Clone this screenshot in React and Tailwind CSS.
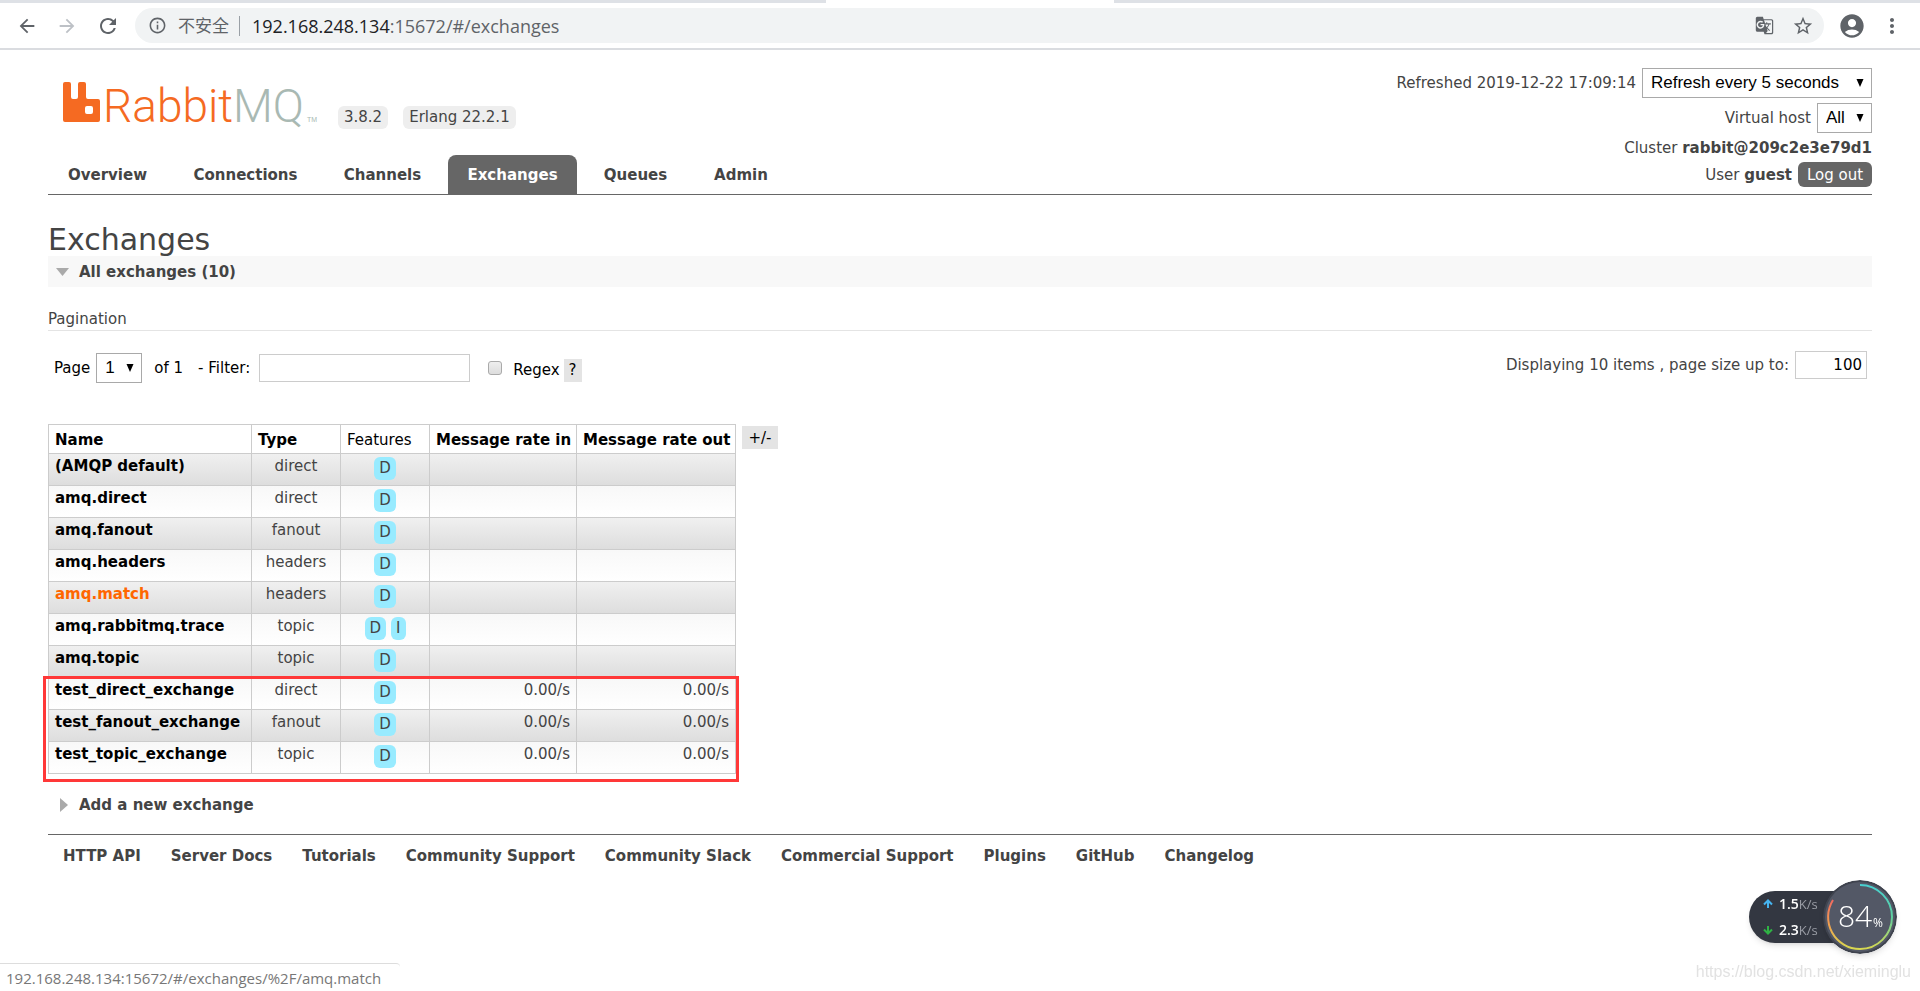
import React from "react";
import {
  MdArrowBack,
  MdArrowForward,
  MdRefresh,
  MdInfoOutline,
  MdGTranslate,
  MdStarBorder,
  MdAccountCircle,
  MdMoreVert,
} from "react-icons/md";

const tabs = [
  { name: "Overview", width: "w-[119px]" },
  { name: "Connections", width: "w-[143px]" },
  { name: "Channels", width: "w-[117px]" },
  { name: "Exchanges", width: "w-[129px]", active: true },
  { name: "Queues", width: "w-[103px]" },
  { name: "Admin", width: "w-[94px]" },
];

const exchanges = [
  { name: "(AMQP default)", type: "direct", features: ["D"] },
  { name: "amq.direct", type: "direct", features: ["D"] },
  { name: "amq.fanout", type: "fanout", features: ["D"] },
  { name: "amq.headers", type: "headers", features: ["D"] },
  { name: "amq.match", type: "headers", features: ["D"], hovered: true },
  { name: "amq.rabbitmq.trace", type: "topic", features: ["D", "I"] },
  { name: "amq.topic", type: "topic", features: ["D"] },
  { name: "test_direct_exchange", type: "direct", features: ["D"], rate: "0.00/s" },
  { name: "test_fanout_exchange", type: "fanout", features: ["D"], rate: "0.00/s" },
  { name: "test_topic_exchange", type: "topic", features: ["D"], rate: "0.00/s" },
];

const footerLinks = [
  "HTTP API",
  "Server Docs",
  "Tutorials",
  "Community Support",
  "Community Slack",
  "Commercial Support",
  "Plugins",
  "GitHub",
  "Changelog",
];

const BrowserBar = () => (
  <div className="border-b-2 border-[#dadce0] bg-white">
    {/* bottom edge of the tab strip, open under the active tab */}
    <div className="flex h-[3px] justify-between">
      <div className="w-[43%] bg-[#dee1e6]" />
      <div className="w-[42%] bg-[#dee1e6]" />
    </div>
    <div className="flex h-[45px] items-center pr-4 pl-4 text-[#5f6368]">
      <button aria-label="Back" className="mr-[18px]">
        <MdArrowBack size={22} />
      </button>
      <button aria-label="Forward" className="mr-[18px] text-[#bdc1c6]">
        <MdArrowForward size={22} />
      </button>
      <button aria-label="Reload" className="mr-[15px]">
        <MdRefresh size={24} />
      </button>
      <div className="flex h-[35px] flex-1 items-center rounded-full bg-[#f1f3f4] pr-2.5 pl-[13px] font-['Noto_Sans','Noto_Sans_CJK_SC',sans-serif] text-[17px]">
        <MdInfoOutline size={19} />
        <span className="ml-[11px]">不安全</span>
        <span className="mr-3 ml-2.5 h-5 w-px bg-[#9aa0a6]" />
        <span className="flex-1 font-['Open_Sans',sans-serif] text-[18px]">
          <span className="text-[#202124]">192.168.248.134</span>:15672/#/exchanges
        </span>
        <button aria-label="Translate" className="mr-[18px]">
          <MdGTranslate size={19} />
        </button>
        <button aria-label="Bookmark">
          <MdStarBorder size={22} />
        </button>
      </div>
      <button aria-label="Profile" className="ml-3.5">
        <MdAccountCircle size={28} />
      </button>
      <button aria-label="Menu" className="ml-3.5">
        <MdMoreVert size={24} />
      </button>
    </div>
  </div>
);

const Logo = () => (
  <a href="#/" aria-label="RabbitMQ">
    <svg width="262" height="60" viewBox="0 0 262 60">
      <path
        fill="#f56a22"
        d="M2 5q0-2 2-2h4q2 0 2 2v13q0 2 2 2h3q2 0 2-2V5q0-2 2-2h4q2 0 2 2v13q0 2 2 2h10q2 0 2 2v19q0 2-2 2H4q-2 0-2-2zM26 27q-2 0-2 2v4q0 2 2 2h4q2 0 2-2v-4q0-2-2-2z"
        fillRule="evenodd"
      />
      <text x="42" y="43" fontSize="46" fontWeight="300" fontFamily="Roboto, sans-serif" fill="#f56a22">
        Rabbit<tspan fill="#a9b9b3">MQ</tspan>
      </text>
      <text x="246" y="43" fontSize="7" fontFamily="'Liberation Sans', sans-serif" fill="#a9b9b3">
        TM
      </text>
    </svg>
  </a>
);

const Select = ({ id, label, value, className }) => (
  <span className="relative inline-flex">
    <select
      id={id}
      aria-label={label}
      className={`h-[30px] appearance-none border border-[#a9a9a9] bg-white pl-2 font-['Liberation_Sans',sans-serif] text-[17px] text-black ${className}`}
    >
      <option>{value}</option>
    </select>
    <svg className="pointer-events-none absolute top-[11px] right-2" width="8" height="8" viewBox="0 0 8 8">
      <path d="M0.500 0h7L4 8z" />
    </svg>
  </span>
);

const Header = () => (
  <header className="flex items-end justify-between border-b border-[#666]">
    <div>
      <div className="flex items-end gap-[15px] pb-4 pl-[13px]">
        <Logo />
        <abbr className="mb-2.5 rounded-md bg-[#eee] px-1.5 leading-[23px]">3.8.2</abbr>
        <abbr className="mb-2.5 rounded-md bg-[#eee] px-1.5 leading-[23px]">Erlang 22.2.1</abbr>
      </div>
      <nav className="flex gap-[7px]">
        {tabs.map((tab) => (
          <a
            key={tab.name}
            href={`#/${tab.name.toLowerCase()}`}
            className={`h-[39px] rounded-t-lg text-center leading-[41px] font-bold whitespace-nowrap ${tab.width} ${
              tab.active ? "bg-[#666] text-white" : ""
            }`}
          >
            {tab.name}
          </a>
        ))}
      </nav>
    </div>
    <ul className="flex flex-col items-end pb-[7px]">
      <li className="mb-[5px] flex items-center gap-1.5">
        <label htmlFor="refresh">Refreshed 2019-12-22 17:09:14</label>
        <Select id="refresh" value="Refresh every 5 seconds" className="w-[230px]" />
      </li>
      <li className="mb-1 flex items-center gap-1.5">
        <label htmlFor="vhost">Virtual host</label>
        <Select id="vhost" value="All" className="w-[55px]" />
      </li>
      <li className="mb-0.5 leading-[23px]">
        Cluster <b>rabbit@209c2e3e79d1</b>
      </li>
      <li className="flex items-center gap-1.5">
        <span>
          User <b>guest</b>
        </span>
        <button className="h-[25px] w-[74px] rounded-md bg-[#666] text-white">Log out</button>
      </li>
    </ul>
  </header>
);

const Pagination = () => (
  <div className="flex items-start justify-between pr-[5px] pl-1.5">
    <div className="flex items-center pt-[22px] text-black">
      <label htmlFor="page" className="mr-1.5">
        Page
      </label>
      <Select id="page" value="1" className="w-[46px]" />
      <span className="ml-3">of 1</span>
      <label htmlFor="filter" className="ml-[15px] whitespace-nowrap">
        - Filter:
      </label>
      <input id="filter" type="text" className="ml-[9px] h-7 w-[211px] border border-[#ccc] px-1" />
      <input
        id="regex"
        type="checkbox"
        className="ml-[18px] size-3.5 appearance-none rounded-[3px] border border-[#aaa] bg-linear-to-b from-[#eee] to-[#ddd]"
      />
      <label htmlFor="regex" className="ml-[11px] pt-1">
        Regex
      </label>
      <button className="mt-1 ml-1 h-[23px] w-[18px] bg-[#e4e4e4]">?</button>
    </div>
    <div className="flex items-center gap-1.5 pt-5">
      <label htmlFor="size">Displaying 10 items , page size up to:</label>
      <input
        id="size"
        type="text"
        defaultValue="100"
        className="h-7 w-[72px] border border-[#ccc] px-1 text-right text-black"
      />
    </div>
  </div>
);

const ExchangeRow = ({ exchange }) => (
  <tr className="h-8 bg-linear-to-b odd:from-[#f0f0f0] odd:to-[#ddd] even:from-[#f8f8f8] even:to-white">
    <td className="border border-[#ccc] px-1.5 pt-px align-top font-bold whitespace-nowrap">
      <a href={`#/exchanges/${exchange.name}`} className={exchange.hovered ? "text-[#f60]" : "text-black"}>
        {exchange.name}
      </a>
    </td>
    <td className="border border-[#ccc] pt-px text-center align-top">{exchange.type}</td>
    <td className="border border-[#ccc] pt-[3px] align-top">
      <div className="flex justify-center gap-[5px]">
        {exchange.features.map((f) => (
          <span key={f} className="rounded-md bg-[#98ebff] px-[5px] leading-[23px]">
            {f}
          </span>
        ))}
      </div>
    </td>
    <td className="border border-[#ccc] px-1.5 pt-px text-right align-top">{exchange.rate}</td>
    <td className="border border-[#ccc] px-1.5 pt-px text-right align-top">{exchange.rate}</td>
  </tr>
);

const ExchangeTable = () => (
  <div className="mt-[41px] flex items-start gap-1.5">
    <div className="relative">
      <table className="w-[688px] table-fixed border-collapse leading-[22px]">
        <colgroup>
          <col className="w-[203px]" />
          <col className="w-[89px]" />
          <col className="w-[89px]" />
          <col className="w-[147px]" />
          <col className="w-[159px]" />
        </colgroup>
        <thead>
          <tr className="h-[29px] text-left whitespace-nowrap text-black">
            <th className="border border-[#ccc] px-1.5 pt-0.5">Name</th>
            <th className="border border-[#ccc] px-1.5 pt-0.5">Type</th>
            <th className="border border-[#ccc] px-1.5 pt-0.5 font-normal">Features</th>
            <th className="border border-[#ccc] px-1.5 pt-0.5">Message rate in</th>
            <th className="border border-[#ccc] px-1.5 pt-0.5">Message rate out</th>
          </tr>
        </thead>
        <tbody>
          {exchanges.map((exchange) => (
            <ExchangeRow key={exchange.name} exchange={exchange} />
          ))}
        </tbody>
      </table>
      {/* marks the three test exchanges */}
      <div className="pointer-events-none absolute -right-[3px] -bottom-2 -left-[5px] h-[106px] border-3 border-[#ff3838]" />
    </div>
    <button className="mt-0.5 h-[23px] w-9 bg-[#e4e4e4] text-black">+/-</button>
  </div>
);

const SpeedWidget = () => (
  <div className="fixed right-[23px] bottom-[37px] flex h-[74px] items-center">
    <div className="-mr-10 flex h-[52px] w-[114px] flex-col justify-center rounded-l-full bg-[#333741] pl-3.5 font-['Open_Sans',sans-serif] text-[14px] leading-[26px] font-semibold text-white shadow-md">
      <span className="flex items-center gap-1.5">
        <svg width="10" height="10" viewBox="0 0 10 10" fill="none" stroke="#46b4f0" strokeWidth="2">
          <path d="M5 9V2M1 5.500l4-4 4 4" />
        </svg>
        <span>
          1.5<span className="text-[13px] font-normal text-[#9a9da5]">K/s</span>
        </span>
      </span>
      <span className="flex items-center gap-1.5">
        <svg width="10" height="10" viewBox="0 0 10 10" fill="none" stroke="#2fb344" strokeWidth="2">
          <path d="M5 1v7M1 4.500l4 4 4-4" />
        </svg>
        <span>
          2.3<span className="text-[13px] font-normal text-[#9a9da5]">K/s</span>
        </span>
      </span>
    </div>
    <svg className="relative rounded-full shadow-md" width="74" height="74" viewBox="0 0 74 74">
      <defs>
        <linearGradient id="ringRight" x1="0" y1="0" x2="0" y2="1">
          <stop offset="0" stopColor="#48d0d0" />
          <stop offset="0.5" stopColor="#5fd0a0" />
          <stop offset="1" stopColor="#d8d850" />
        </linearGradient>
        <linearGradient id="ringLeft" x1="0" y1="0" x2="0" y2="1">
          <stop offset="0" stopColor="#f06a60" />
          <stop offset="0.5" stopColor="#f0a050" />
          <stop offset="1" stopColor="#d8d850" />
        </linearGradient>
      </defs>
      <circle cx="37" cy="37" r="37" fill="#3f434e" />
      <circle cx="37" cy="37" r="35" fill="#535866" />
      <path d="M37 5a32 32 0 0 1 0 64" fill="none" stroke="url(#ringRight)" strokeWidth="2" />
      <path d="M37 69A32 32 0 0 1 10 20" fill="none" stroke="url(#ringLeft)" strokeWidth="2" />
      <text x="15" y="47" fontSize="30" fontWeight="300" fontFamily="'Open Sans', sans-serif" fill="#fff">
        84
      </text>
      <text x="50" y="47" fontSize="12" fontFamily="'Open Sans', sans-serif" fill="#fff">
        %
      </text>
    </svg>
  </div>
);

const App = () => {
  return (
    <div className="min-h-screen bg-white font-['DejaVu_Sans',sans-serif] text-[15px] leading-[22px] text-[#444]">
      <BrowserBar />
      <main className="px-12 pt-[18px]">
        <Header />
        <h1 className="mt-7 text-[30px] leading-[33px] text-[#444]">Exchanges</h1>
        <h2 className="bg-[#f8f8f8] font-bold">
          <button className="flex h-[31px] items-center gap-2.5 pl-2">
            <svg width="13" height="8" viewBox="0 0 13 8">
              <path d="M0 0h13L6.500 8z" fill="#aaa" />
            </svg>
            All exchanges (10)
          </button>
        </h2>
        <h3 className="mt-[21px] border-b border-[#e4e4e4]">Pagination</h3>
        <Pagination />
        <ExchangeTable />
        <h2 className="mt-[15px] font-bold">
          <button className="flex h-[31px] items-center gap-[11px] pl-3">
            <svg width="8" height="14" viewBox="0 0 8 14">
              <path d="M0 0l8 7-8 7z" fill="#aaa" />
            </svg>
            Add a new exchange
          </button>
        </h2>
        <footer className="mt-3.5 border-t border-[#666] pt-2.5 pl-[15px]">
          <ul className="flex gap-[30px] font-bold whitespace-nowrap">
            {footerLinks.map((link) => (
              <li key={link}>
                <a href="#/">{link}</a>
              </li>
            ))}
          </ul>
        </footer>
      </main>
      <div className="fixed bottom-0 left-0 h-7 w-[400px] rounded-tr border-t border-[#ddd] bg-white pl-1.5 font-['Open_Sans',sans-serif] text-[15px] leading-[28px] text-[#777]">
        192.168.248.134:15672/#/exchanges/%2F/amq.match
      </div>
      <SpeedWidget />
      <span className="fixed right-[9px] bottom-2 font-['Liberation_Sans',sans-serif] text-[16px] leading-[22px] text-[#e2e2e2]">
        https://blog.csdn.net/xieminglu
      </span>
    </div>
  );
};

export default App;
